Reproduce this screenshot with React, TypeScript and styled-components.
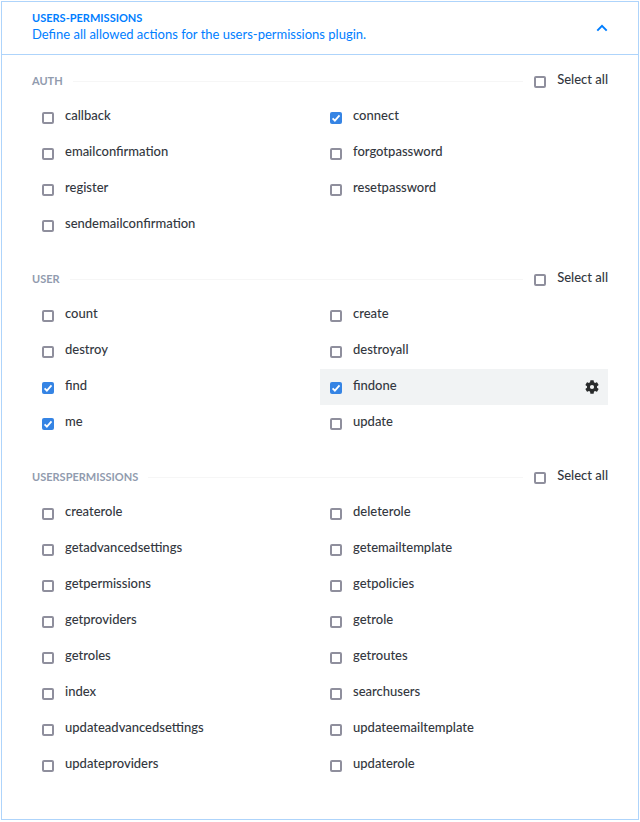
import React, { useState } from 'react';
import styled, { createGlobalStyle } from 'styled-components';

const GlobalStyle = createGlobalStyle`
  *, *::before, *::after { box-sizing: border-box; }
  body {
    margin: 0;
    background: #ffffff;
    color: #333740;
    font-family: Lato, "Open Sans", sans-serif;
    font-size: 13px;
    font-weight: 500;
    line-height: 18px;
  }
`;

const Panel = styled.section`
  margin: 1px;
  border: 1px solid #aed4fb;
  background: #ffffff;
`;

const Header = styled.header`
  display: flex;
  align-items: center;
  justify-content: space-between;
  min-height: 53px;
  padding: 0 30px;
  border-bottom: 1px solid #aed4fb;
  color: #007eff;
`;

const Heading = styled.div`
  padding-bottom: 4px;
`;

const Title = styled.h1`
  margin: 0;
  font-size: 11px;
  font-weight: 700;
  line-height: 16px;
  text-transform: uppercase;
`;

const Description = styled.p`
  margin: 0;
  font-weight: 400;
  line-height: 16px;
`;

const IconButton = styled.button`
  display: flex;
  padding: 0;
  border: 0;
  background: none;
  color: inherit;
  cursor: pointer;
`;

const SettingsButton = styled(IconButton)`
  color: #292b2c;
`;

const Body = styled.div`
  display: flex;
  flex-direction: column;
  gap: 18px;
  padding: 8px 30px 36px;
`;

const GroupHeader = styled.div`
  display: flex;
  align-items: center;
  height: 36px;
`;

const GroupName = styled.h2`
  margin: 0;
  color: #919bae;
  font-size: 11px;
  font-weight: 700;
  text-transform: uppercase;
`;

const Rule = styled.div`
  flex: 1;
  height: 1px;
  margin: 0 11px 0 10px;
  background: #f6f6f6;
`;

const Grid = styled.div`
  display: grid;
  grid-template-columns: 1fr 1fr;
`;

const Cell = styled.div<{ $active: boolean }>`
  display: flex;
  align-items: center;
  justify-content: space-between;
  height: 36px;
  padding: 0 9px 0 10px;
  background: ${({ $active }) => ($active ? '#f1f3f4' : 'transparent')};
`;

const CheckLabel = styled.label`
  display: flex;
  align-items: center;
  gap: 11px;
  padding-bottom: 5px;
  cursor: pointer;
`;

const Box = styled.input`
  appearance: none;
  width: 12px;
  height: 12px;
  margin: 7px 0 0;
  border: 2px solid #8f8f9d;
  border-radius: 2px;
  background: #ffffff;
  &:checked {
    border: 0;
    background: #3584e4 url("data:image/svg+xml,%3Csvg xmlns='http://www.w3.org/2000/svg' viewBox='0 0 12 12'%3E%3Cpath d='M2.6 6.3 4.9 8.6 9.5 3.4' fill='none' stroke='white' stroke-width='1.8'/%3E%3C/svg%3E") center / 12px 12px;
  }
`;

type CheckProps = { label: string; checked: boolean; onChange: () => void };

const Check = ({ label, checked, onChange }: CheckProps) => (
  <CheckLabel>
    <Box type="checkbox" checked={checked} onChange={onChange} />
    <span>{label}</span>
  </CheckLabel>
);

const Chevron = () => (
  <svg width="12" height="8" viewBox="0 0 12 8" aria-hidden="true">
    <path d="M1.3 6.6 6 1.9 10.7 6.6" fill="none" stroke="currentColor" strokeWidth="2" />
  </svg>
);

const Gear = () => (
  <svg width="14" height="14" viewBox="2 2 20 20" fill="currentColor" aria-hidden="true">
    <path d="M19.14 12.94c.04-.3.06-.61.06-.94s-.02-.64-.07-.94l2.03-1.58a.49.49 0 0 0 .12-.61l-1.92-3.32a.49.49 0 0 0-.59-.22l-2.39.96a7 7 0 0 0-1.62-.94l-.36-2.54a.48.48 0 0 0-.48-.41h-3.84a.48.48 0 0 0-.47.41l-.36 2.54a7 7 0 0 0-1.62.94l-2.39-.96a.48.48 0 0 0-.59.22L2.74 8.87a.48.48 0 0 0 .12.61l2.03 1.58a6 6 0 0 0 0 1.88l-2.03 1.58a.49.49 0 0 0-.12.61l1.92 3.32c.12.22.37.29.59.22l2.39-.96c.5.38 1.03.7 1.62.94l.36 2.54c.05.24.24.41.48.41h3.84c.24 0 .44-.17.47-.41l.36-2.54a7 7 0 0 0 1.62-.94l2.39.96c.22.08.47 0 .59-.22l1.92-3.32a.48.48 0 0 0-.12-.61zM12 15a3 3 0 1 1 0-6 3 3 0 0 1 0 6" />
  </svg>
);

const groups = [
  {
    name: 'auth',
    actions: ['callback', 'connect', 'emailconfirmation', 'forgotpassword', 'register', 'resetpassword', 'sendemailconfirmation'],
  },
  { name: 'user', actions: ['count', 'create', 'destroy', 'destroyall', 'find', 'findone', 'me', 'update'] },
  {
    name: 'userspermissions',
    actions: [
      'createrole', 'deleterole', 'getadvancedsettings', 'getemailtemplate',
      'getpermissions', 'getpolicies', 'getproviders', 'getrole',
      'getroles', 'getroutes', 'index', 'searchusers',
      'updateadvancedsettings', 'updateemailtemplate', 'updateproviders', 'updaterole',
    ],
  },
];

export default function App() {
  const [open, setOpen] = useState(true);
  const [enabled, setEnabled] = useState<string[]>(['connect', 'find', 'findone', 'me']);
  const [active, setActive] = useState('findone');

  const toggle = (action: string) => {
    setEnabled((list) => (list.includes(action) ? list.filter((a) => a !== action) : [...list, action]));
    setActive(action);
  };

  const toggleAll = (actions: string[], all: boolean) =>
    setEnabled((list) => {
      const rest = list.filter((a) => !actions.includes(a));
      return all ? rest : [...rest, ...actions];
    });

  return (
    <>
      <GlobalStyle />
      <Panel>
        <Header>
          <Heading>
            <Title>Users-Permissions</Title>
            <Description>Define all allowed actions for the users-permissions plugin.</Description>
          </Heading>
          <IconButton type="button" aria-label="Toggle section" aria-expanded={open} onClick={() => setOpen(!open)}>
            <Chevron />
          </IconButton>
        </Header>
        {open && (
          <Body>
            {groups.map(({ name, actions }) => {
              const all = actions.every((a) => enabled.includes(a));
              return (
                <section key={name}>
                  <GroupHeader>
                    <GroupName>{name}</GroupName>
                    <Rule />
                    <Check label="Select all" checked={all} onChange={() => toggleAll(actions, all)} />
                  </GroupHeader>
                  <Grid>
                    {actions.map((action) => (
                      <Cell key={action} $active={action === active}>
                        <Check label={action} checked={enabled.includes(action)} onChange={() => toggle(action)} />
                        {action === active && (
                          <SettingsButton type="button" aria-label={`Configure ${action}`}>
                            <Gear />
                          </SettingsButton>
                        )}
                      </Cell>
                    ))}
                  </Grid>
                </section>
              );
            })}
          </Body>
        )}
      </Panel>
    </>
  );
}
